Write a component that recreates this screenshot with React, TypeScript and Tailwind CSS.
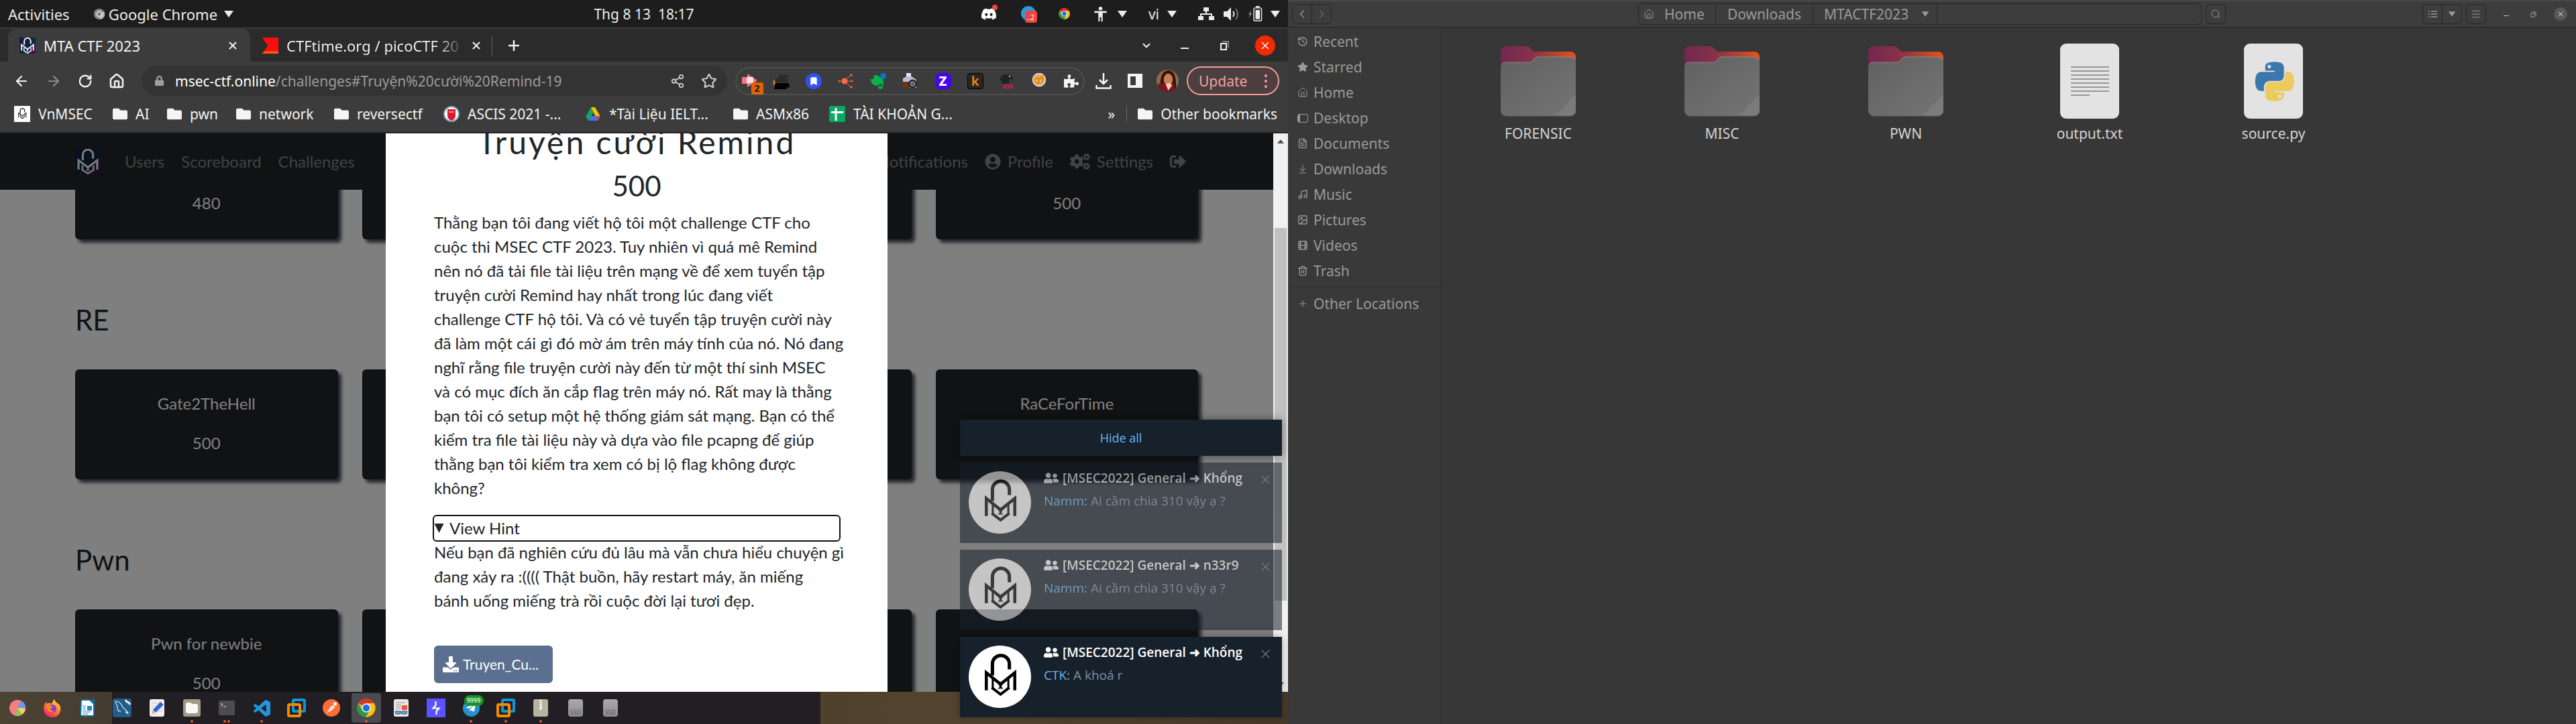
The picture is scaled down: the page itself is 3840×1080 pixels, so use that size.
import React, { type ReactNode } from "react";
import {
  ArrowDownToLine, ArrowLeft, ArrowRight, BookmarkIcon, ChevronDown, ChevronLeft, ChevronRight,
  FileText, Film, History, House, Image as ImageIcon, Menu, Music, Plus, RotateCw, Search,
  Share2, Star, Trash2, X,
} from "lucide-react";
import {
  FaCogs, FaDiscord, FaDownload, FaFolder, FaLock, FaPuzzlePiece, FaSignOutAlt,
  FaTelegramPlane, FaUserCircle, FaUserFriends, FaBell,
} from "react-icons/fa";

/* ---------- shared drawings ---------- */

const Caret = ({ className = "" }: { className?: string }) => (
  <svg viewBox="0 0 14 14" className={`size-[14px] ${className}`} fill="currentColor" aria-hidden="true">
    <path d="M0 2h14L7 12z" />
  </svg>
);

const Lock = ({ className = "" }: { className?: string }) => (
  <svg viewBox="0 0 92 92" className={className} fill="none" stroke="currentColor" aria-hidden="true">
    <path d="M35 44V27a12.500 12.500 0 0 1 25 0v8" strokeWidth="5" />
    <path d="M26 66V40l21 17 21-17v26" strokeWidth="4.500" />
    <path d="M35.500 48v16M58.500 48v16" strokeWidth="3" />
    <path d="M34 62l13 10 13-10" strokeWidth="4" />
    <path d="M47 54v10M44 57l3 2 3-2M44 64l3-4 3 4" strokeWidth="1.500" />
    <circle cx="47" cy="59" r="2" fill="currentColor" stroke="none" />
  </svg>
);

const LockTile = ({ className = "" }: { className?: string }) => (
  <svg viewBox="0 0 60 60" className={className} aria-hidden="true">
    <defs>
      <linearGradient id="tile" x1="0" y1="0" x2="1" y2="1">
        <stop offset="0" stopColor="#1a1450" />
        <stop offset=".5" stopColor="#0b2a3c" />
        <stop offset="1" stopColor="#4d0a50" />
      </linearGradient>
    </defs>
    <rect width="60" height="60" fill="url(#tile)" />
    <g fill="none" stroke="#f3f0fa" strokeWidth="5">
      <path d="M18 27V14a12 12 0 0 1 24 0v9" />
      <path d="M8 49V27l22 17 22-17v22" />
      <path d="M17 39v11l13 8 13-8V39" strokeWidth="4" />
    </g>
    <circle cx="30" cy="49" r="3" fill="#f3f0fa" />
  </svg>
);

const ChromeLogo = ({ className = "" }: { className?: string }) => (
  <svg viewBox="0 0 48 48" className={className} aria-hidden="true">
    <circle cx="24" cy="24" r="23" fill="#fbc116" />
    <path d="M24 24 4.1 12.5A23 23 0 0 1 44 12.6H24z" fill="#dc3328" />
    <path d="M4.1 12.5A23 23 0 0 0 23 47l10.5-17.500L24 24l-10 6z" fill="#2a9a46" />
    <path d="M44 12.600H24v11.400l9.800 5.800L23.500 47A23 23 0 0 0 44 12.600z" fill="#fbc116" />
    <circle cx="24" cy="24" r="11.500" fill="#fff" />
    <circle cx="24" cy="24" r="9" fill="#1b70e8" />
  </svg>
);

const VMware = () => (
  <svg viewBox="0 0 28 28" className="size-7" fill="none" strokeWidth="4" aria-hidden="true">
    <rect x="9" y="2" width="17" height="17" rx="1.500" stroke="#0d97d8" />
    <rect x="2" y="9" width="17" height="17" rx="1.500" stroke="#f28b00" />
    <path d="M9 13v4a2 2 0 0 0 2 2h4" stroke="#0d97d8" />
  </svg>
);

/* ---------- desktop top bar ---------- */

const TopBar = () => (
  <header className="flex h-[43px] shrink-0 items-center border-b-2 border-[#3a3a3a] bg-[#1d1d1d] px-3 text-[21px] leading-7 text-[#ececec]">
    <div className="flex flex-1 items-center text-[22px]">
      <button className="mr-9">Activities</button>
      <button className="flex items-center gap-1.5">
        <svg viewBox="0 0 16 16" className="size-4" aria-hidden="true">
          <circle cx="8" cy="8" r="8" fill="#8b8b8b" />
          <path d="M8 8 15 4a8 8 0 0 1-6 12z" fill="#bcbcbc" />
          <circle cx="8" cy="8" r="3.500" fill="#777" stroke="#eee" strokeWidth="1.500" />
        </svg>
        Google Chrome
        <Caret className="ml-1" />
      </button>
    </div>
    <time>Thg 8 13&nbsp; 18:17</time>
    <div className="flex flex-1 items-center justify-end">
      <span className="relative mr-9">
        <FaDiscord className="size-6 text-white" />
        <i className="absolute -right-px -top-0.5 size-2 rounded-full bg-[#f04747]" />
      </span>
      <svg viewBox="0 0 24 26" className="mr-8 h-[26px] w-6" aria-hidden="true">
        <circle cx="11" cy="12" r="11" fill="#2a9bd7" />
        <rect x="6" y="8" width="18" height="18" rx="4" fill="#ee4540" />
        <text x="9" y="22" fontSize="10" fill="#fff" fontFamily="Noto Sans">..2</text>
      </svg>
      <ChromeLogo className="mr-9 size-[17px]" />
      <svg viewBox="0 0 20 24" className="mr-4 h-[22px] w-[19px]" fill="currentColor" aria-hidden="true">
        <circle cx="10" cy="3" r="3" />
        <path d="M0 7h20v3h-6.500v14h-2.300v-7H8.800v7H6.500V10H0z" />
      </svg>
      <Caret className="mr-8" />
      <span className="mr-3">vi</span>
      <Caret className="mr-8" />
      <svg viewBox="0 0 24 20" className="mr-3.5 h-5 w-6" fill="currentColor" aria-hidden="true">
        <path d="M8 0h8v6h-3v3h8v4h3v6h-8v-6h3v-2H5v2h3v6H0v-6h3V9h8V6H8z" />
      </svg>
      <svg viewBox="0 0 24 20" className="mr-3 h-5 w-6" aria-hidden="true">
        <path d="M0 6h5l6-6v20l-6-6H0z" fill="currentColor" />
        <path d="M14 6q3 4 0 8" stroke="currentColor" strokeWidth="2" fill="none" />
        <path d="M18 2q6 8 0 16" stroke="#777" strokeWidth="2" fill="none" />
      </svg>
      <svg viewBox="0 0 22 24" className="mr-3 h-[23px] w-[22px]" aria-hidden="true">
        <path d="M5 6 1 13h2l-2 6 5-8H3.500z" fill="#999" />
        <rect x="9" y="3" width="12" height="20" rx="2" fill="none" stroke="currentColor" strokeWidth="1.500" />
        <rect x="11.500" y="6" width="7" height="14.500" fill="currentColor" />
        <rect x="12" width="6" height="2.500" fill="currentColor" />
      </svg>
      <Caret />
    </div>
  </header>
);

/* ---------- browser chrome ---------- */

const TabStrip = () => (
  <div className="flex h-[49px] shrink-0 items-end bg-[#2b2b2b]">
    <div className="ml-3 flex h-[49px] w-[361px] items-center rounded-t-xl bg-[#3c3c3c] px-[17px]">
      <LockTile className="h-6 w-6" />
      <span className="ml-3 flex-1 text-[22px] leading-7">MTA CTF 2023</span>
      <button aria-label="Close tab"><X className="size-[18px]" strokeWidth={2.500} /></button>
    </div>
    <div className="flex h-[49px] flex-1 items-center pl-[18px]">
      <svg viewBox="0 0 24 24" className="size-6" aria-hidden="true">
        <path d="M0 0h24v24H0l8-12z" fill="#fb0d0d" />
        <path d="M2.500 20.500h21.500V24H0z" fill="#ff5a0a" />
      </svg>
      <span className="ml-3 w-[264px] overflow-hidden whitespace-nowrap bg-linear-to-r from-[#f4f4f4] from-85% to-transparent bg-clip-text text-[22px] leading-7 text-transparent">
        CTFtime.org / picoCTF 20
      </span>
      <button className="ml-2.5" aria-label="Close tab"><X className="size-[18px]" strokeWidth={2.500} /></button>
      <span className="ml-3.5 h-[30px] w-px bg-[#606060]" />
      <button className="ml-5" aria-label="New tab"><Plus className="size-6" strokeWidth={2.500} /></button>
    </div>
    <div className="mr-[19px] flex h-[49px] items-center">
      <button className="mr-[42px]" aria-label="Search tabs"><ChevronDown className="size-[18px]" strokeWidth={2.500} /></button>
      <button className="mr-[46px] mt-2 h-0.5 w-3 bg-[#eee]" aria-label="Minimize" />
      <button className="mr-[39px]" aria-label="Restore">
        <svg viewBox="0 0 14 14" className="size-[14px]" fill="none" aria-hidden="true">
          <rect x="2" y="4" width="8" height="9" stroke="#f4f4f4" strokeWidth="2" />
          <path d="M4.500 1H13v9" stroke="#999" strokeWidth="1.500" />
        </svg>
      </button>
      <button className="grid size-[30px] place-items-center rounded-full bg-[#f22a02]" aria-label="Close window">
        <X className="size-[18px]" />
      </button>
    </div>
  </div>
);

const extensions: { name: string; icon: ReactNode }[] = [
  {
    name: "Honey",
    icon: (
      <svg viewBox="0 0 34 34" className="-mr-2.5 -mb-2 size-[34px]">
        <path d="M1 7h8V2l15 10L9 22v-5H1z" fill="#f77581" />
        <path d="M8 7h10v9H8z" fill="#ffe3e6" />
        <rect x="15" y="15" width="18" height="18" rx="2" fill="#e06502" />
        <text x="19.500" y="29" fontSize="14" fontWeight="bold" fill="#24180c" fontFamily="Noto Sans">2</text>
      </svg>
    ),
  },
  {
    name: "Cat",
    icon: (
      <svg viewBox="0 0 24 24" className="size-6">
        <path d="M0 9l3 5-3 5z" fill="#f28a13" />
        <path d="M2 9l5-1 2-6h4l1 2 7-2 3 2-6 3 5 2-3 5H3z" fill="#2a2a2a" />
        <path d="M3 15h20l1 8-3-2v-2l-2 5H1z" fill="#000" />
      </svg>
    ),
  },
  {
    name: "Saved",
    icon: (
      <span className="grid size-6 place-items-center rounded-full bg-[#3152f1]">
        <BookmarkIcon className="size-3.5 fill-white text-white" />
      </span>
    ),
  },
  {
    name: "Network",
    icon: (
      <svg viewBox="0 0 24 24" className="size-6" fill="#ff6b42" stroke="#ff6b42">
        <path d="M2 12h18M10 12l9-9M10 12l9 9" strokeWidth="1" fill="none" />
        <circle cx="10" cy="12" r="4" /><circle cx="2" cy="12" r="1" /><circle cx="21" cy="12" r="1" />
        <circle cx="20" cy="3" r="1.200" /><circle cx="20" cy="21" r="1.200" />
      </svg>
    ),
  },
  {
    name: "Notes",
    icon: (
      <svg viewBox="0 0 24 24" className="size-6">
        <path d="M6 3c5 0 8 1 9 4 3 1 5 2 5 6 0 6-1 11-5 11-3 0-4-4-1-5h2v2c2 0 2-3 1-5l-4 1c-1 3-5 2-9 0L0 9h5z" fill="#0ab14a" />
        <circle cx="19.500" cy="4.500" r="4.500" fill="#0a74c9" />
      </svg>
    ),
  },
  {
    name: "Screenshot",
    icon: (
      <svg viewBox="0 0 24 24" className="size-6">
        <path d="M6 0h7v6H6z" fill="#e8e8f2" />
        <path d="M1 8l5-3h8l7 5v12H1z" fill="#bdbccd" />
        <path d="M1 13h10v9H1z" fill="#6b3411" />
        <circle cx="15.500" cy="16" r="6.500" fill="#22222a" />
        <circle cx="15.500" cy="16" r="3.500" fill="#5f6070" stroke="#a7a7b8" />
      </svg>
    ),
  },
  { name: "Z", icon: <span className="grid size-6 place-items-center rounded-lg bg-[#4503fa] text-xl font-extrabold leading-6 text-white">Z</span> },
  { name: "K", icon: <span className="grid size-6 place-items-center rounded-sm border border-black bg-[#262626] text-xl font-semibold leading-5 text-[#f3870c]">k</span> },
  {
    name: "CSS",
    icon: (
      <svg viewBox="0 0 24 24" className="size-6">
        <path d="M1 9c1-7 8-8 12-6 6-1 7 3 7 8l-4-3-2 3v6l-3-2-4 2-3-2z" fill="#1c242b" />
        <circle cx="15" cy="5" r="1" fill="#fff" />
        <text x="5" y="23" fontSize="8.500" fontWeight="bold" fill="#ff0a78" fontFamily="Noto Sans">CSS</text>
      </svg>
    ),
  },
  {
    name: "Fox",
    icon: (
      <svg viewBox="0 0 24 24" className="size-6">
        <circle cx="11" cy="10" r="9.500" fill="#c8b089" stroke="#efe2cc" strokeWidth="1.500" />
        <path d="M3 9l5-3h5l5-4-1 10-5 4H7z" fill="#f3890e" />
        <path d="M6 9l3 2-2 2zM14 9l-3 3 3 1z" fill="#fbdfb0" />
      </svg>
    ),
  },
  { name: "Extensions", icon: <FaPuzzlePiece className="size-[22px] text-[#f4f4f4]" /> },
];

const Toolbar = () => (
  <div className="flex h-[57px] shrink-0 items-center bg-[#3c3c3c] pl-5 pr-[13px]">
    <div className="flex w-[191px] items-center gap-6">
      <button aria-label="Back"><ArrowLeft className="size-6" strokeWidth={2.200} /></button>
      <button aria-label="Forward"><ArrowRight className="size-6 text-[#8b8b8b]" strokeWidth={2.200} /></button>
      <button aria-label="Reload"><RotateCw className="size-[22px]" strokeWidth={2.500} /></button>
      <button aria-label="Home"><House className="size-6" strokeWidth={2.500} /></button>
    </div>
    <div className="relative flex h-[45px] flex-1 items-center rounded-full bg-[#333333] pl-[19px] pr-[15px]">
      <FaLock className="size-[15px] text-[#9aa0a6]" />
      <p className="ml-4 flex-1 whitespace-nowrap text-[21px] leading-7 text-[#9c9c9c]">
        <span className="text-white">msec-ctf.online</span>/challenges#Truyện%20cười%20Remind-19
      </p>
      <button className="mr-6" aria-label="Share"><Share2 className="size-[22px] text-[#c9c9c9]" /></button>
      <button aria-label="Bookmark"><Star className="size-6 text-[#d4d4d4]" /></button>
    </div>
    <div className="ml-3 flex h-[42px] w-[521px] items-center justify-between rounded-full border-2 border-[#4f4f4f] px-[7px]">
      {extensions.map((e) => (
        <button key={e.name} aria-label={e.name}>{e.icon}</button>
      ))}
    </div>
    <button className="ml-4" aria-label="Downloads">
      <svg viewBox="0 0 24 24" className="size-6" fill="none" stroke="#f4f4f4" strokeWidth="2.500" aria-hidden="true">
        <path d="M12 0v15M6 10l6 6 6-6M1.500 18v4.500h21V18" />
      </svg>
    </button>
    <button className="ml-6" aria-label="Side panel">
      <span className="block h-[21px] w-[22px] border-4 border-r-[10px] border-[#f4f4f4]" />
    </button>
    <button className="ml-[21px]" aria-label="Profile">
      <svg viewBox="0 0 34 34" className="size-[33px] rounded-full">
        <rect width="34" height="34" fill="#8d6a4f" />
        <path d="M6 34C4 12 9 1 18 1s13 9 12 33z" fill="#37130d" />
        <ellipse cx="18" cy="15" rx="7" ry="9" fill="#c97f57" />
        <path d="M2 22l8-2 8 3 8-3 4 14H4z" fill="#7d1420" />
        <path d="M14 22l6-2 4 4-6 8z" fill="#efd2b6" />
      </svg>
    </button>
    <button className="ml-3 flex h-[43px] w-[138px] items-center justify-between rounded-full border-2 border-[#f29b97] bg-[#4d3f3f] pl-4 pr-4 text-[21px] leading-7 text-[#f4a19d]">
      Update
      <span className="flex flex-col gap-1">
        <i className="size-1 rounded-full bg-current" />
        <i className="size-1 rounded-full bg-current" />
        <i className="size-1 rounded-full bg-current" />
      </span>
    </button>
  </div>
);

const folder = <FaFolder className="size-[22px] shrink-0" />;

const bookmarks: { label: string; width: string; icon: ReactNode }[] = [
  { label: "VnMSEC", width: "w-[147px]", icon: <span className="grid size-6 place-items-center bg-white text-[#222]"><Lock className="size-6" /></span> },
  { label: "AI", width: "w-[81px]", icon: folder },
  { label: "pwn", width: "w-[103px]", icon: folder },
  { label: "network", width: "w-[146px]", icon: folder },
  { label: "reversectf", width: "w-[163px]", icon: folder },
  {
    label: "ASCIS 2021 -...",
    width: "w-[211px]",
    icon: (
      <svg viewBox="0 0 24 24" className="size-6 shrink-0">
        <circle cx="12" cy="12" r="11" fill="#fff" stroke="#7ba6bd" strokeWidth="2" />
        <path d="M6 5h12v9q0 6-6 8-6-2-6-8z" fill="#e0162b" />
        <path d="M8 9h8" stroke="#f6a5ac" strokeWidth="1.500" />
      </svg>
    ),
  },
  {
    label: "*Tài Liệu IELT...",
    width: "w-[221px]",
    icon: (
      <svg viewBox="0 0 24 24" className="size-6 shrink-0">
        <path d="M9 2 1 16l4 6 8-13z" fill="#11a75c" />
        <path d="M9 2h6l8 14h-7z" fill="#fdc207" />
        <path d="M5 22l4-7h14l-4 7z" fill="#3d77ee" />
        <path d="M16 16h7l-4 6z" fill="#e5402f" />
      </svg>
    ),
  },
  { label: "ASMx86", width: "w-[143px]", icon: folder },
  {
    label: "TÀI KHOẢN G...",
    width: "w-[200px]",
    icon: (
      <svg viewBox="0 0 24 24" className="size-6 shrink-0">
        <rect width="24" height="24" rx="2" fill="#0aa95f" />
        <path d="M3 9.500h18M10 3v19" stroke="#fff" strokeWidth="3" />
      </svg>
    ),
  },
];

const BookmarkBar = () => (
  <nav className="flex h-[50px] shrink-0 items-center border-b-2 border-[#232323] bg-[#3c3c3c] pb-1.5 pl-[21px] pr-4 text-[21px] leading-7">
    {bookmarks.map((b) => (
      <a key={b.label} href="#" className={`flex shrink-0 items-center gap-3 whitespace-nowrap ${b.width}`}>
        {b.icon}
        <span>{b.label}</span>
      </a>
    ))}
    <button className="ml-auto mr-[17px]" aria-label="More bookmarks">»</button>
    <span className="h-6 w-px bg-[#666]" />
    <a href="#" className="ml-4 flex items-center gap-3">
      {folder}
      Other bookmarks
    </a>
  </nav>
);

/* ---------- challenge page ---------- */

type Card = { name?: string; points?: string };

const CardRow = ({ cards, className = "" }: { cards: Card[]; className?: string }) => (
  <div className={`grid grid-cols-4 gap-9 ${className}`}>
    {cards.map((c, i) => (
      <button key={i} className="rounded-md bg-[#212529] pb-9 pt-[33px] text-center text-white shadow-[5px_5px_5px_#4b4e60]">
        <p className="min-h-9">{c.name}</p>
        <p className="mt-[23px] min-h-9">{c.points}</p>
      </button>
    ))}
  </div>
);

const description = [
  "Thằng bạn tôi đang viết hộ tôi một challenge CTF cho",
  "cuộc thi MSEC CTF 2023. Tuy nhiên vì quá mê Remind",
  "nên nó đã tải file tài liệu trên mạng về để xem tuyển tập",
  "truyện cười Remind hay nhất trong lúc đang viết",
  "challenge CTF hộ tôi. Và có vẻ tuyển tập truyện cười này",
  "đã làm một cái gì đó mờ ám trên máy tính của nó. Nó đang",
  "nghĩ rằng file truyện cười này đến từ một thí sinh MSEC",
  "và có mục đích ăn cắp flag trên máy nó. Rất may là thằng",
  "bạn tôi có setup một hệ thống giám sát mạng. Bạn có thể",
  "kiểm tra file tài liệu này và dựa vào file pcapng để giúp",
  "thằng bạn tôi kiểm tra xem có bị lộ flag không được",
  "không?",
];

const hint = [
  "Nếu bạn đã nghiên cứu đủ lâu mà vẫn chưa hiểu chuyện gì",
  "đang xảy ra :(((( Thật buồn, hãy restart máy, ăn miếng",
  "bánh uống miếng trà rồi cuộc đời lại tươi đẹp.",
];

const Lines = ({ lines }: { lines: string[] }) => (
  <p className="whitespace-nowrap">
    {lines.map((l) => (
      <span key={l} className="block">{l}</span>
    ))}
  </p>
);

const ChallengeDialog = () => (
  <div className="absolute inset-0 flex justify-center overflow-hidden bg-black/50">
    <section role="dialog" aria-label="Truyện cười Remind" className="-mt-4 w-[748px] bg-white px-[72px] text-[#212529]">
      <h2 className="whitespace-nowrap text-center text-5xl leading-[58px] tracking-[3px]">Truyện cười Remind</h2>
      <h3 className="mb-3 mt-[11px] text-center text-[42px] leading-[50px]">500</h3>
      <Lines lines={description} />
      <details open className="mt-6">
        <summary className="list-none rounded-sm outline-2 outline-[#101010]">
          <span className="flex h-9 items-center gap-2">
            <svg viewBox="0 0 14 14" className="h-[14px] w-[15px]" fill="currentColor" aria-hidden="true"><path d="M0 0h14L7 14z" /></svg>
            View Hint
          </span>
        </summary>
        <Lines lines={hint} />
      </details>
      <a href="#" className="mt-[49px] flex h-14 w-[177px] items-center gap-1.5 rounded-md bg-[#5b7090] pl-[13px] text-[21px] leading-8 text-white">
        <FaDownload className="size-6" />
        Truyen_Cu...
      </a>
    </section>
  </div>
);

const ChallengePage = () => (
  <div className="flex min-h-0 flex-1">
    <div className="relative flex flex-1 flex-col overflow-hidden bg-white font-[Lato,Roboto,'Noto_Sans',sans-serif] text-2xl leading-9 text-[#212529]">
      <nav className="z-0 flex h-[84px] shrink-0 items-center bg-[#212529] px-[112px] text-white/45">
        <LockTile className="size-[38px]" />
        <div className="ml-9 flex flex-1 gap-[25px]">
          <a href="#">Users</a>
          <a href="#">Scoreboard</a>
          <a href="#">Challenges</a>
        </div>
        <div className="flex items-center gap-[25px] pr-[18px]">
          <a href="#" className="flex items-center gap-2.5"><FaBell />Notifications</a>
          <a href="#" className="flex items-center gap-2.5"><FaUserCircle />Profile</a>
          <a href="#" className="flex items-center gap-2.5"><FaCogs className="size-[30px]" />Settings</a>
          <a href="#" aria-label="Sign out"><FaSignOutAlt /></a>
        </div>
      </nav>
      <main className="min-h-0 flex-1 overflow-hidden px-[112px]">
        <CardRow className="-mt-[90px]" cards={[{ points: "480" }, {}, {}, { points: "500" }]} />
        <h3 className="mb-[49px] mt-[95px] text-[42px] leading-[50px]">RE</h3>
        <CardRow cards={[{ name: "Gate2TheHell", points: "500" }, {}, {}, { name: "RaCeForTime" }]} />
        <h3 className="mb-[49px] mt-[95px] text-[42px] leading-[50px]">Pwn</h3>
        <CardRow cards={[{ name: "Pwn for newbie", points: "500" }, {}, {}, {}]} />
      </main>
      <ChallengeDialog />
    </div>
    <div className="flex w-[22px] flex-col items-center bg-[#f1f1f1] text-[#505050]" aria-hidden="true">
      <svg viewBox="0 0 10 6" className="mt-[9px] h-[6px] w-[10px]" fill="currentColor"><path d="M5 0l5 6H0z" /></svg>
      <span className="mt-[126px] h-[556px] w-[18px] bg-[#c1c1c1]" />
      <svg viewBox="0 0 10 6" className="mb-2 mt-auto h-[6px] w-[10px]" fill="currentColor"><path d="M5 6l5-6H0z" /></svg>
    </div>
  </div>
);

/* ---------- dock ---------- */

const Ssd = () => (
  <span className="flex h-[26px] w-[22px] items-end justify-center rounded-sm bg-linear-to-b from-[#a8a8a8] to-[#8d8d8d] text-[9px] leading-3 text-[#5f5f5f]">SSD</span>
);

const dock: { name: string; dots?: number; active?: boolean; icon: ReactNode }[] = [
  {
    name: "Disk usage",
    icon: (
      <svg viewBox="0 0 24 24" className="size-6">
        <circle cx="12" cy="12" r="12" fill="#f47f80" />
        <path d="M12 12 17 1.200A12 12 0 0 1 24 13z" fill="#6d97f5" />
        <path d="M12 12l12 1a12 12 0 0 1-5 8.500z" fill="#ffd35a" />
        <path d="M12 12l7 9.700A12 12 0 0 1 9.500 24z" fill="#84cb56" />
      </svg>
    ),
  },
  {
    name: "Firefox",
    icon: (
      <svg viewBox="0 0 26 27" className="h-[27px] w-[26px]">
        <defs>
          <linearGradient id="fox" x1="1" y1="0" x2=".3" y2="1">
            <stop offset="0" stopColor="#fff14a" /><stop offset=".45" stopColor="#ff9224" /><stop offset="1" stopColor="#f3216f" />
          </linearGradient>
        </defs>
        <path d="M16 0c1 5 6 6 8 9 4 8-1 18-11 18C5 27 0 21 0 14c0-4 1-7 4-10l1 3c3-2 6-1 7 0 1-3 2-5 4-7z" fill="url(#fox)" />
        <circle cx="13" cy="14" r="6" fill="#7a3ae0" />
        <path d="M4 9q5 0 8 2l2-1q0 3-4 4 1 4 6 3-5 5-10 0z" fill="#ff8a1c" />
      </svg>
    ),
  },
  {
    name: "Writer",
    icon: (
      <svg viewBox="0 0 22 26" className="h-[26px] w-[22px]">
        <path d="M2 1h13l6 6v16q0 2-2 2H3q-2 0-2-2z" fill="#fff" stroke="#0e6c9d" strokeWidth="2" />
        <path d="M15 0h7v7z" fill="#0e6c9d" />
        <path d="M4 10h5M4 13h5M4 16h5M4 19h12M4 22h9" stroke="#1a7fb3" strokeWidth="1.200" />
        <path d="M11 10h7v7h-7z" fill="#2388bd" />
      </svg>
    ),
  },
  {
    name: "MySQL Workbench",
    icon: (
      <svg viewBox="0 0 28 28" className="size-7">
        <rect width="28" height="28" rx="4" fill="#225c87" />
        <path d="M4 4c5 0 9 4 11 9 2 3 5 4 8 8l-4-1 4 3M4 4c0 4 3 5 3 8s0 5 2 7c1-2 2 0 3 1" fill="none" stroke="#d9e6ef" strokeWidth="1.200" />
        <path d="M19 2l2 3 3 1 2 3" stroke="#fff" strokeWidth="2.500" fill="none" />
      </svg>
    ),
  },
  {
    name: "Text editor",
    icon: (
      <svg viewBox="0 0 22 26" className="h-[26px] w-[22px]">
        <rect width="22" height="26" rx="3" fill="#f0efee" />
        <path d="M3 6h16M3 10h16M3 14h16M3 18h16" stroke="#cdccd2" />
        <path d="M16 4l5 4L9 20l-4-4z" fill="#2b63d8" />
        <path d="M5 16l4 4-6 3z" fill="#e8b58a" />
      </svg>
    ),
  },
  {
    name: "Files",
    dots: 1,
    icon: (
      <svg viewBox="0 0 26 26" className="size-[26px]">
        <rect width="26" height="26" rx="3" fill="#a09a86" />
        <path d="M4 8q0-3 3-3h4l2 2h6q3 0 3 3v8q0 3-3 3H7q-3 0-3-3z" fill="#fbf9f5" />
      </svg>
    ),
  },
  {
    name: "Terminal",
    dots: 2,
    icon: (
      <svg viewBox="0 0 24 22" className="h-[22px] w-6">
        <rect width="24" height="22" rx="2.500" fill="#4d4d4d" />
        <path d="M3 4l3 2-3 2M7 9h4" stroke="#e5e5e5" fill="none" />
      </svg>
    ),
  },
  {
    name: "Code",
    dots: 1,
    icon: (
      <svg viewBox="0 0 24 24" className="size-[25px]" fill="#2196dc">
        <path d="M23.150 2.587L18.210.210a1.494 1.494 0 0 0-1.705.290l-9.460 8.630-4.120-3.128a.999.999 0 0 0-1.276.057L.327 7.261A1 1 0 0 0 .326 8.740L3.899 12 .326 15.260a1 1 0 0 0 .001 1.479L1.650 17.940a.999.999 0 0 0 1.276.057l4.120-3.128 9.460 8.630a1.492 1.492 0 0 0 1.704.290l4.942-2.377A1.500 1.500 0 0 0 24 20.060V3.939a1.500 1.500 0 0 0-.850-1.352zm-5.146 14.861L10.826 12l7.178-5.448v10.896z" />
      </svg>
    ),
  },
  { name: "VMware", icon: <VMware /> },
  {
    name: "Postman",
    icon: (
      <svg viewBox="0 0 26 26" className="size-[26px]">
        <circle cx="13" cy="13" r="13" fill="#ff6c37" />
        <circle cx="18.500" cy="7" r="2.500" fill="#fff" />
        <path d="M5 21l8-11 4-1 1 3-5 5z" fill="#fff" />
        <path d="M5 21 17 10" stroke="#ff6c37" strokeWidth=".800" />
      </svg>
    ),
  },
  { name: "Chrome", dots: 1, active: true, icon: <ChromeLogo className="size-7" /> },
  {
    name: "Document viewer",
    icon: (
      <svg viewBox="0 0 22 26" className="h-[26px] w-[22px]">
        <rect width="22" height="26" rx="3" fill="#ebe9e6" />
        <path d="M3 5h14M3 8h8M3 11h8M3 14h8" stroke="#b7b1aa" strokeWidth="1.500" />
        <rect x="12" y="9" width="8" height="7" fill="#ea5545" />
        <path d="M2 18h8v4H3zM12 18h8l-1 4h-7zM10 19h2" fill="#7da2cd" stroke="#2c5288" />
      </svg>
    ),
  },
  {
    name: "Burp",
    icon: (
      <svg viewBox="0 0 28 28" className="size-7">
        <rect width="28" height="28" fill="#5d52ff" />
        <path d="M13.500 4v6l-4 4.500h9l-4 4.500v5M13.500 10l-3 4M14.500 19l3-4" stroke="#fff" strokeWidth="2.200" fill="none" />
      </svg>
    ),
  },
  {
    name: "Telegram",
    dots: 1,
    icon: (
      <span className="relative grid size-[25px] place-items-center rounded-full bg-[#2592cf] text-white">
        <FaTelegramPlane className="size-4" />
        <b className="absolute -top-[7px] left-0.5 h-4 w-[29px] rounded-full bg-[#159424] text-center text-[9px] font-medium leading-4">9999</b>
      </span>
    ),
  },
  { name: "VMware Player", dots: 1, icon: <VMware /> },
  {
    name: "Archive",
    dots: 1,
    icon: (
      <svg viewBox="0 0 22 26" className="h-[26px] w-[22px]">
        <rect width="22" height="26" rx="3" fill="#b8b3a1" />
        <path d="M11 1v12" stroke="#fff" strokeWidth="3" strokeDasharray="2 1" />
        <rect x="9.500" y="11" width="3" height="5" rx="1" fill="#f5f5f5" />
      </svg>
    ),
  },
  { name: "Disk 1", icon: <Ssd /> },
  { name: "Disk 2", icon: <Ssd /> },
];

const Dock = () => (
  <footer className="flex h-12 shrink-0 items-center bg-[linear-gradient(90deg,#4d4333_0,#453c31_167px,#211f24_167px,#211f24_1223px,#4f412c_1223px,#54452f_1500px,#473a28_100%)]">
    {dock.map((d) => (
      <button key={d.name} aria-label={d.name} className="relative grid h-12 w-[52px] shrink-0 place-items-center">
        <span className={`grid h-11 w-11 place-items-center rounded-sm ${d.active ? "bg-[#4b4b4f]" : ""}`}>{d.icon}</span>
        {d.dots && (
          <span className="absolute bottom-0.5 left-0 flex w-full justify-center gap-0.5">
            {Array.from({ length: d.dots }, (_, i) => <i key={i} className="size-1 rounded-full bg-[#e95420]" />)}
          </span>
        )}
      </button>
    ))}
  </footer>
);

/* ---------- message pop-ups ---------- */

const messages = [
  { to: "Khổng", from: "Namm:", text: "Ai cầm chìa 310 vậy ạ ?", faded: true },
  { to: "n33r9", from: "Namm:", text: "Ai cầm chìa 310 vậy ạ ?", faded: true },
  { to: "Khổng", from: "CTK:", text: "A khoá r", faded: false },
];

const Messages = () => (
  <aside className="absolute bottom-[10px] right-[9px] flex w-[480px] flex-col gap-2.5 font-['Open_Sans','Noto_Sans',sans-serif]">
    <button className="h-[54px] bg-[#17212b] text-lg leading-6 text-[#6ab3f3] shadow-[0_0_12px_rgba(0,0,0,0.4)]">Hide all</button>
    {messages.map((m, i) => (
      <article key={i} className={`flex h-[120px] bg-[#17212b] pl-[13px] pt-[13px] ${m.faded ? "opacity-55" : "shadow-[0_0_12px_rgba(0,0,0,0.3)]"}`}>
        <span className="size-[93px] shrink-0 rounded-full bg-white text-black"><Lock className="size-[93px]" /></span>
        <div className="ml-[19px] flex-1 whitespace-nowrap">
          <h4 className="-mt-1 flex h-[28px] items-center gap-1.5 text-[19px] font-semibold leading-7 text-white">
            <FaUserFriends className="size-[22px]" />
            <span>[MSEC2022] General ➜ {m.to}</span>
          </h4>
          <p className="mt-1.5 text-[19px] leading-7 text-[#7f91a4]">
            <span className="text-[#6ab3f3]">{m.from}</span> {m.text}
          </p>
        </div>
        <button className="mr-3.5 mt-0.5 self-start text-[#6a7783]" aria-label="Dismiss">
          <X className="size-[21px]" strokeWidth={1.500} />
        </button>
      </article>
    ))}
  </aside>
);

/* ---------- file manager ---------- */

const ic = "size-4 shrink-0";
const places = [
  { name: "Recent", icon: <History className={ic} /> },
  { name: "Starred", icon: <Star className={`${ic} fill-current`} /> },
  { name: "Home", icon: <House className={ic} strokeWidth={1.500} /> },
  {
    name: "Desktop",
    icon: <span className="h-[13px] w-4 shrink-0 rounded-sm border border-l-4 border-current" />,
  },
  { name: "Documents", icon: <FileText className={ic} /> },
  { name: "Downloads", icon: <ArrowDownToLine className={ic} strokeWidth={1.500} /> },
  { name: "Music", icon: <Music className={ic} /> },
  { name: "Pictures", icon: <ImageIcon className={ic} /> },
  { name: "Videos", icon: <Film className={ic} /> },
  { name: "Trash", icon: <Trash2 className={ic} /> },
];

const FolderIcon = () => (
  <svg viewBox="0 0 114 112" className="h-[112px] w-[114px]" aria-hidden="true">
    <defs>
      <linearGradient id="fback" x1="0" y1="0" x2="1" y2="0">
        <stop offset="0" stopColor="#722850" /><stop offset=".4" stopColor="#87314a" /><stop offset=".75" stopColor="#b8452f" /><stop offset="1" stopColor="#e95420" />
      </linearGradient>
      <linearGradient id="ffront" x1="0" y1="0" x2="1" y2="1">
        <stop offset="0" stopColor="#616161" /><stop offset="1" stopColor="#747474" />
      </linearGradient>
    </defs>
    <path d="M1 12Q1 4 9 4h33l8 8h54q9 0 9 9v30H1z" fill="url(#fback)" />
    <path d="M1 36q0-8 8-8h37l8-8h50q9 0 9 9v70q0 9-9 9H10q-9 0-9-9z" fill="url(#ffront)" />
    <path d="M113 76v23q0 9-9 9H82z" fill="#7b7b7b" />
    <path d="M3 30q2-2 6-2h37l8-8h50q5 0 7 3" stroke="#8b8b8b" fill="none" />
    <path d="M4 106q3 2 6 2h94q4 0 6-2" stroke="#77615c" fill="none" />
  </svg>
);

const TextIcon = () => (
  <svg viewBox="0 0 88 112" className="h-[112px] w-[88px]" aria-hidden="true">
    <rect width="88" height="112" rx="9" fill="#e3e3e3" />
    <path d="M16 35h57M16 41h57M16 47h57M16 53h57M16 59h57M16 65h57M16 71h57M16 77h28" stroke="#979797" strokeWidth="2" />
  </svg>
);

const PythonIcon = () => (
  <svg viewBox="0 0 88 112" className="h-[112px] w-[88px]" aria-hidden="true">
    <rect width="88" height="112" rx="9" fill="#e3e3e3" />
    <g transform="translate(15 26) scale(.480)">
      <path fill="#3d78ad" d="M49.330 62h29.159C86.606 62 93 55.132 93 46.981V19.183c0-7.912-6.632-13.856-14.555-15.176-5.014-.835-10.195-1.215-15.187-1.191-4.990.023-9.612.448-13.805 1.191C37.098 6.188 35 10.758 35 19.183V30h29v4H23.776c-8.484 0-15.914 5.108-18.237 14.811-2.681 11.120-2.800 17.919 0 29.530C7.614 86.983 12.569 93 21.054 93H31V79.952C31 70.315 39.428 62 49.330 62zm-1.838-39.110c-3.026 0-5.478-2.479-5.478-5.545 0-3.079 2.451-5.581 5.478-5.581 3.015 0 5.479 2.502 5.479 5.581-.001 3.066-2.465 5.545-5.479 5.545z" />
      <path fill="#ecca5b" d="M122.281 48.811C120.183 40.363 116.178 34 107.682 34H97v12.981C97 57.031 88.206 65 78.489 65H49.330C41.342 65 35 72.326 35 80.326v27.800c0 7.910 6.745 12.564 14.462 14.834 9.242 2.717 17.994 3.208 29.051 0C85.862 120.831 93 116.549 93 108.126V97H64v-4h43.682c8.484 0 11.647-5.776 14.599-14.660 3.047-9.145 2.916-17.799 0-29.529zm-41.955 55.606c3.027 0 5.479 2.479 5.479 5.547 0 3.076-2.451 5.579-5.479 5.579-3.015 0-5.478-2.502-5.478-5.579 0-3.068 2.463-5.547 5.478-5.547z" />
    </g>
  </svg>
);

const files = [
  { name: "FORENSIC", icon: <FolderIcon /> },
  { name: "MISC", icon: <FolderIcon /> },
  { name: "PWN", icon: <FolderIcon /> },
  { name: "output.txt", icon: <TextIcon /> },
  { name: "source.py", icon: <PythonIcon /> },
];

const FileManager = () => (
  <section className="flex flex-1 flex-col bg-[#373737] text-[21px] leading-7 text-[#9a9a9a]">
    <header className="flex h-[41px] shrink-0 items-center border-b border-t-2 border-b-[#262626] border-t-[#484848] bg-[#3d3d3d] pl-1.5 pr-[13px]">
      <div className="flex h-[30px] w-[59px] divide-x divide-[#262626] rounded-md border border-[#262626]">
        <button className="grid flex-1 place-items-center" aria-label="Back"><ChevronLeft className="size-5" strokeWidth={1.500} /></button>
        <button className="grid flex-1 place-items-center text-[#666]" aria-label="Forward"><ChevronRight className="size-5" strokeWidth={1.500} /></button>
      </div>
      <div className="ml-[457px] flex h-8 w-[840px] divide-x divide-[#262626] rounded-md border border-[#262626]">
        <button className="flex w-[115px] items-center gap-[15px] pl-[7px]"><House className={ic} strokeWidth={1.500} />Home</button>
        <button className="w-[145px]">Downloads</button>
        <button className="flex w-[185px] items-center justify-between pl-4 pr-2.5">MTACTF2023<Caret className="scale-75" /></button>
        <span className="flex-1" />
      </div>
      <button className="ml-1.5 grid h-[30px] w-[30px] place-items-center rounded-md border border-[#262626]" aria-label="Search">
        <Search className="size-4" strokeWidth={1.500} />
      </button>
      <div className="ml-auto flex h-[30px] w-[59px] divide-x divide-[#262626] rounded-md border border-[#262626]">
        <button className="grid flex-1 place-items-center" aria-label="List view">
          <svg viewBox="0 0 14 12" className="h-3 w-3.5" fill="none" stroke="currentColor" strokeWidth="1.500" aria-hidden="true">
            <path d="M5 2h9M5 6h9M5 10h9M1 2h2M1 6h2M1 10h2" />
          </svg>
        </button>
        <button className="grid flex-1 place-items-center" aria-label="View options"><Caret className="scale-75" /></button>
      </div>
      <button className="ml-1.5 grid h-[30px] w-[30px] place-items-center rounded-md border border-[#262626]" aria-label="Menu">
        <Menu className="size-4" strokeWidth={1.500} />
      </button>
      <button className="ml-[26px] mt-1 h-px w-2 bg-[#bbb]" aria-label="Minimize" />
      <button className="ml-8" aria-label="Restore">
        <svg viewBox="0 0 10 10" className="size-[9px]" fill="none" stroke="#aaa" aria-hidden="true">
          <path d="M1 3h6v6H1zM3 1h6v6" />
        </svg>
      </button>
      <button className="ml-[26px] grid size-5 place-items-center rounded-full bg-[#595959] text-[#e8e8e8]" aria-label="Close"><X className="size-3" /></button>
    </header>
    <div className="flex flex-1">
      <nav className="w-[229px] shrink-0 border-r border-[#2b2b2b] bg-[#393939] pt-0.5">
        {places.map((p) => (
          <a key={p.name} href="#" className="flex h-[38px] items-center gap-2 pl-3.5">{p.icon}{p.name}</a>
        ))}
        <hr className="mb-1.5 mt-1 border-[#303030]" />
        <a href="#" className="flex h-[38px] items-center gap-2 pl-3.5"><Plus className={ic} strokeWidth={1.500} />Other Locations</a>
      </nav>
      <ul className="flex flex-1 flex-wrap content-start pl-[7px] pt-6 text-[#d4d4d4]">
        {files.map((f) => (
          <li key={f.name} className="flex w-[274px] flex-col items-center">
            {f.icon}
            <span className="mt-2">{f.name}</span>
          </li>
        ))}
      </ul>
    </div>
  </section>
);

export default function App() {
  return (
    <div className="flex h-screen overflow-hidden bg-[#1d1d1d] font-['Noto_Sans',sans-serif]">
      <section className="relative flex w-1/2 flex-col text-[#f4f4f4]">
        <TopBar />
        <TabStrip />
        <Toolbar />
        <BookmarkBar />
        <ChallengePage />
        <Dock />
        <Messages />
      </section>
      <FileManager />
    </div>
  );
}
